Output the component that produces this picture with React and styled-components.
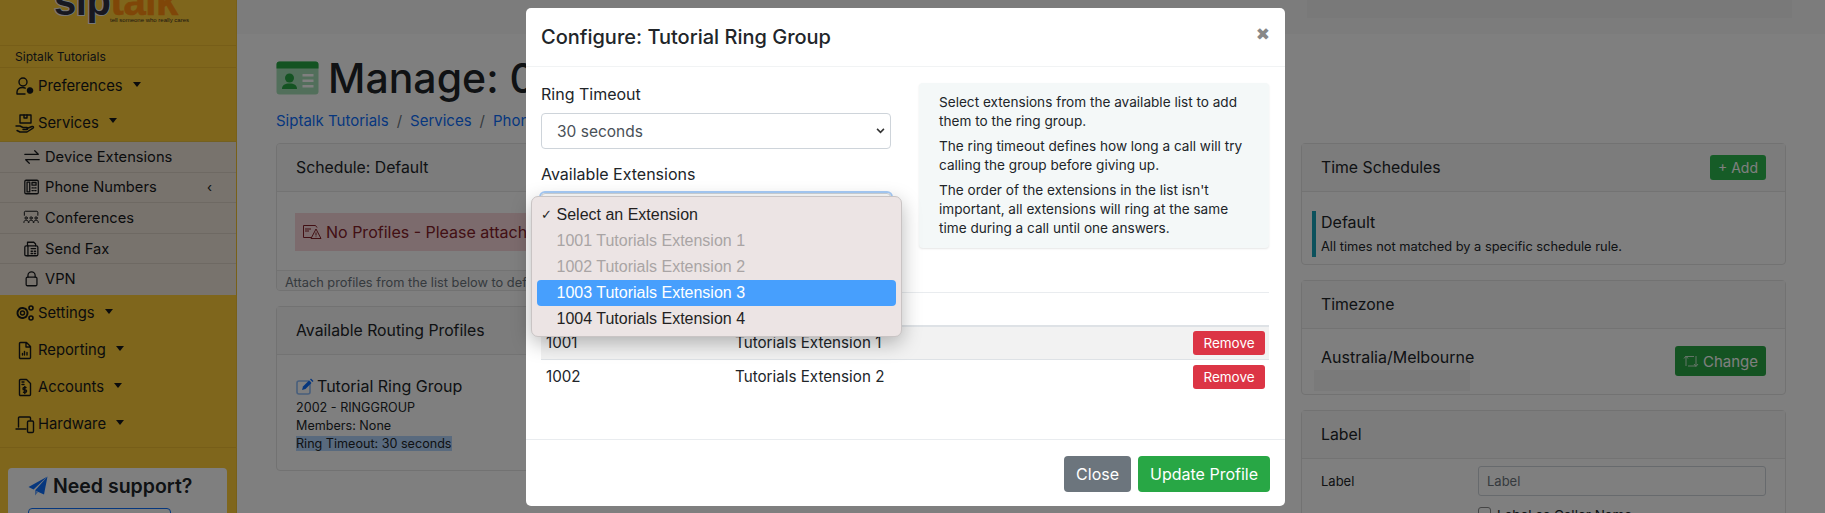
import React from "react";
import styled, { createGlobalStyle } from "styled-components";

const Global = createGlobalStyle`
  html, body { margin: 0; padding: 0; height: 513px; overflow: hidden; background: #fff; }
  body { font-family: Inter, "Open Sans", "Liberation Sans", sans-serif; color: #212529; }
  * { box-sizing: border-box; }
  #root { height: 513px; }
`;

const Page = styled.div`
  position: relative;
  display: flex;
  width: 1825px;
  height: 513px;
  overflow: hidden;
`;
const Sidebar = styled.aside`
  flex: 0 0 237px;
  background: #fecc38;
  border-right: 1px solid #f0c030;
  display: flex;
  flex-direction: column;
  > * { flex: none; }
`;
const LogoWrap = styled.div`
  height: 46px;
  border-bottom: 1px solid #eebd30;
  overflow: hidden;
  padding-left: 54px;
`;
const LogoMark = styled.div`
  font-family: "Liberation Sans", sans-serif;
  font-weight: 700;
  font-size: 40px;
  line-height: 30px;
  letter-spacing: -0.4px;
  margin-top: -14px;
  white-space: nowrap;
  color: #2f3140;
  -webkit-text-stroke: 2px #f0f0f0;
  paint-order: stroke fill;
  span { color: #ff8c10; -webkit-text-stroke: 0.6px #ff8c10; }
`;
const LogoTag = styled.div`
  font-family: "Liberation Sans", sans-serif;
  font-size: 6px;
  line-height: 7px;
  margin: 1px 0 0 56px;
  white-space: nowrap;
  color: #3a3020;
`;
const Account = styled.div`
  height: 22px;
  border-bottom: 1px solid #eebd30;
  padding-left: 15px;
  font-size: 12.1px;
  line-height: 22px;
  color: #212529;
`;
const NavItem = styled.div`
  height: ${(p) => (p.$tight ? 36.5 : 37)}px;
  display: flex;
  align-items: center;
  padding-left: 15px;
  gap: 3px;
  font-size: 14.8px;
  color: #16181b;
  svg { flex: none; }
`;
const Caret = styled.i`
  width: 0;
  height: 0;
  margin-left: 7px;
  margin-bottom: 4px;
  border-left: 4.5px solid transparent;
  border-right: 4.5px solid transparent;
  border-top: 5px solid #16181b;
`;
const SubMenu = styled.div`
  background: #f0e6da;
  border-top: 1px solid #e8c040;
`;
const SubItem = styled.div`
  height: 30.6px;
  display: flex;
  align-items: center;
  padding: 0 24px 0 23px;
  gap: 4px;
  font-size: 14.7px;
  color: #16181b;
  border-bottom: 1px solid ${(p) => (p.$last ? "transparent" : "#ddd2c6")};
  svg { flex: none; }
`;
const Chevron = styled.span`
  margin-left: auto;
  font-size: 13px;
`;
const NavGroup = styled.div`
  border-bottom: 1px solid #eebd30;
  padding-bottom: 4px;
`;
const Support = styled.div`
  margin: 20px 9px 0 8px;
  height: 80px;
  border-radius: 4px;
  background: #fff;
  padding: 6px 20px;
`;
const SupportTitle = styled.div`
  display: flex;
  align-items: center;
  gap: 5px;
  font-size: 19.5px;
  font-weight: 600;
  line-height: 24px;
`;
const SupportBtn = styled.div`
  margin-top: 10px;
  width: 143px;
  height: 36px;
  border: 1px solid #0d6efd;
  border-radius: 4px;
`;

const Main = styled.main`
  flex: 1;
  min-width: 0;
  display: flex;
  flex-direction: column;
`;
const TopBar = styled.div`
  height: 34px;
  flex: none;
  background: #f9f9f9;
  padding-left: 1070px;
`;
const TopInner = styled.div`
  width: 485px;
  height: 18px;
  background: #f2f2f2;
`;
const Content = styled.div`
  padding: 20px 39px 0 39px;
`;
const TitleRow = styled.div`
  display: flex;
  align-items: center;
  gap: 9px;
  height: 48px;
`;
const H1 = styled.h1`
  margin: 0;
  font-size: 41px;
  font-weight: 500;
  white-space: nowrap;
  color: #212529;
`;
const Crumbs = styled.div`
  margin-top: 7px;
  height: 24px;
  display: flex;
  gap: 8px;
  font-size: 15px;
  line-height: 24px;
  color: #6c757d;
  white-space: nowrap;
  a { color: #0d6efd; }
`;
const Columns = styled.div`
  display: grid;
  grid-template-columns: 1000px 485px;
  gap: 25px;
  margin-top: 10px;
`;
const Stack = styled.div`
  display: flex;
  flex-direction: column;
  gap: 15px;
`;
const Card = styled.section`
  border: 1px solid #e4e4e4;
  border-radius: 4px;
  background: #fff;
  height: ${(p) => p.$h}px;
  overflow: ${(p) => (p.$clip ? "hidden" : "visible")};
`;
const CardHead = styled.div`
  height: 48px;
  padding: 0 19px;
  display: flex;
  align-items: center;
  justify-content: space-between;
  background: #f8f8f8;
  border-bottom: 1px solid #e6e6e6;
  font-size: 15.8px;
  color: #212529;
`;
const Alert = styled.div`
  margin: 21px 18px 0;
  height: 38px;
  background: #f8d7da;
  color: #842029;
  display: flex;
  align-items: center;
  gap: 4px;
  padding-left: 7px;
  font-size: 16px;
  white-space: nowrap;
  width: 700px;
`;
const CardFoot = styled.div`
  margin-top: 19px;
  height: 24px;
  background: #f8f8f8;
  border-top: 1px solid #e6e6e6;
  padding-left: 8px;
  font-size: 12.8px;
  line-height: 23px;
  color: #6c757d;
  white-space: nowrap;
`;
const Profile = styled.div`
  padding: 18px 19px;
`;
const ProfileTitle = styled.div`
  display: flex;
  align-items: center;
  gap: 3px;
  font-size: 16px;
  line-height: 26px;
`;
const Small = styled.div`
  font-size: 12.6px;
  line-height: 18px;
  white-space: nowrap;
`;
const Highlight = styled.span`
  background: #b3d4fc;
`;
const ScheduleRow = styled.div`
  margin: 19px 0 0 10px;
  border-left: 4px solid #17a2b8;
  height: 46px;
  padding-left: 5px;
`;
const BigText = styled.div`
  font-size: 16px;
  line-height: 23px;
`;
const MiniText = styled.div`
  font-size: 12.85px;
  line-height: 25px;
`;
const GreenBtn = styled.div`
  background: ${(p) => (p.$dark ? "#28a745" : "#2db84e")};
  color: #fff;
  border-radius: 3px;
  font-size: ${(p) => p.$fs}px;
  height: ${(p) => p.$h}px;
  padding: 0 8px;
  display: flex;
  align-items: center;
  gap: 4px;
`;
const ZoneBody = styled.div`
  padding: 17px 19px 0 12px;
  display: flex;
  justify-content: space-between;
`;
const ZoneName = styled.div`
  padding-left: 7px;
  font-size: 16px;
  line-height: 22px;
`;
const Redacted = styled.div`
  width: 156px;
  height: 21px;
  margin-top: 2px;
  background: #f4f4f4;
`;
const FormRow = styled.div`
  display: grid;
  grid-template-columns: 157px 1fr;
  padding: 7px 19px 0;
  align-items: center;
  font-size: 13px;
`;
const FakeInput = styled.div`
  height: 30px;
  border: 1px solid #ced4da;
  border-radius: 3px;
  padding-left: 8px;
  line-height: 28px;
  color: #6c757d;
`;
const CheckRow = styled.div`
  margin: 11px 0 0 176px;
  display: flex;
  gap: 6px;
  font-size: 13.5px;
  line-height: 16px;
  i { width: 13px; height: 13px; border: 1px solid #8a8a8a; border-radius: 3px; }
`;

const Backdrop = styled.div`
  position: absolute;
  inset: 0;
  background: rgba(0, 0, 0, 0.5);
  padding: 8px 0 0 526px;
`;
const Modal = styled.div`
  position: relative;
  width: 759px;
  height: 498px;
  background: #fff;
  border-radius: 5px;
  display: flex;
  flex-direction: column;
`;
const ModalHead = styled.header`
  height: 59px;
  flex: none;
  border-bottom: 1px solid #f1f3f4;
  padding: 0 15px 0 15px;
  display: flex;
  align-items: center;
  justify-content: space-between;
`;
const ModalTitle = styled.h5`
  margin: 0;
  font-size: 20px;
  font-weight: 500;
  color: #212529;
`;
const CloseX = styled.span`
  font-size: 17px;
  color: #888;
  margin-top: -6px;
  font-family: "DejaVu Sans", sans-serif;
`;
const ModalBody = styled.div`
  flex: 1;
  padding: 16px 15px 0;
`;
const FormGrid = styled.div`
  display: grid;
  grid-template-columns: 350px 350px;
  gap: 28px;
  height: 197px;
`;
const Field = styled.div`
  position: relative;
  margin-bottom: 14px;
`;
const FieldLabel = styled.label`
  display: block;
  font-size: 16px;
  line-height: 22px;
  margin-bottom: 8px;
  color: #212529;
`;
const SelectBox = styled.div`
  width: 350px;
  height: 36px;
  border: 1px solid #ced4da;
  border-radius: 4px;
  padding: 0 5px 0 15px;
  display: flex;
  align-items: center;
  justify-content: space-between;
  font-size: 15.5px;
  color: #495057;
  box-shadow: ${(p) => (p.$focus ? "0 0 0 2px #a8cdf8" : "none")};
`;
const Dropdown = styled.div`
  position: absolute;
  left: -10px;
  top: 33px;
  z-index: 3;
  width: 371px;
  height: 141px;
  padding: 5px;
  background: #ece4e4;
  border: 1px solid #c9c4c4;
  border-radius: 7px;
  box-shadow: 0 6px 20px rgba(0, 0, 0, 0.28);
  font-family: "Liberation Sans", Inter, sans-serif;
  font-size: 16px;
`;
const Option = styled.div`
  position: relative;
  height: 26px;
  line-height: 26px;
  padding-left: 19.5px;
  border-radius: 4px;
  white-space: nowrap;
  color: ${(p) => (p.$active ? "#fff" : p.$off ? "#a9a4a4" : "#231f1f")};
  background: ${(p) => (p.$active ? "#479ffd" : "transparent")};
`;
const Tick = styled.span`
  position: absolute;
  left: 4px;
  font-size: 13px;
  font-weight: 700;
  font-family: "DejaVu Sans", sans-serif;
`;
const InfoBox = styled.div`
  height: 165px;
  padding: 10px 18px 10px 20px;
  background: #f4f8f8;
  border-radius: 4px;
  box-shadow: 0 1px 2px rgba(0, 0, 0, 0.1);
  font-size: 13.6px;
  line-height: 19px;
  color: #212529;
  p { margin: 0 0 6px; }
`;
const ExtTable = styled.table`
  width: 728px;
  margin-top: 12px;
  border-collapse: collapse;
  table-layout: fixed;
  font-size: 15.2px;
  color: #212529;
  td { padding: 0 5px; height: 34px; border-bottom: 1px solid #dee2e6; }
`;
const HeadRow = styled.tr`
  td { height: 33px; border-top: 1px solid #e9ecef; border-bottom: 2px solid #dee2e6; }
`;
const StripeRow = styled.tr`
  background: ${(p) => (p.$odd ? "#f2f2f2" : "#fff")};
  td:last-child { text-align: right; padding-right: 4px; }
`;
const PlainRow = styled.tr`
  td { border-bottom: none; text-align: left; }
  td:last-child { text-align: right; padding-right: 4px; }
`;
const RemoveBtn = styled.span`
  display: inline-block;
  width: 72px;
  height: 24px;
  line-height: 24px;
  text-align: center;
  border-radius: 3px;
  background: #dc3545;
  color: #fff;
  font-size: 13.5px;
  vertical-align: middle;
`;
const ModalFoot = styled.footer`
  height: 67px;
  flex: none;
  border-top: 1px solid #e9ecef;
  padding: 16px 15px;
  display: flex;
  justify-content: flex-end;
  gap: 7px;
`;
const FootBtn = styled.span`
  height: 36px;
  line-height: 36px;
  padding: 0 12px;
  border-radius: 4px;
  font-size: 16px;
  color: #fff;
  background: ${(p) => p.$bg};
`;

const Ico = ({ w = 20, h = 20, vb = "0 0 20 20", children, stroke = "#16181b", sw = 1.4 }) => (
  <svg width={w} height={h} viewBox={vb} fill="none" stroke={stroke} strokeWidth={sw} strokeLinecap="round" strokeLinejoin="round">
    {children}
  </svg>
);

const PrefIcon = () => (
  <Ico>
    <circle cx="8" cy="6" r="4" />
    <path d="M2 18v-2c0-3 2.500-4.500 5.500-4.500 1 0 2 .2 2.800.6M2 18h8" />
    <circle cx="15" cy="14.500" r="2.300" fill="#16181b" strokeWidth="2" strokeDasharray="1.500 .8" />
  </Ico>
);
const ServIcon = () => (
  <Ico>
    <rect x="5" y="2" width="11" height="8" />
    <path d="M9 2v3h3V2" />
    <path d="M1 13h4l3 1.500h4c1 0 1 2 0 2H8M12 15.500l5-2c1.500-.5 2 1 1 1.700L12 19H5l-3-1.500" />
  </Ico>
);
const SwapIcon = () => (
  <Ico w={18} h={18}>
    <path d="M2 7h15M13 3l4 4M18 13H3M7 17l-4-4" />
  </Ico>
);
const BookIcon = () => (
  <Ico w={18} h={18}>
    <rect x="2" y="2.500" width="15" height="15" rx="1.500" />
    <rect x="4.500" y="4.500" width="3" height="11" />
    <path d="M10 5h4.500v3H10zM10 11h1.500M13 11h1.500M10 14h1.500M13 14h1.500" />
  </Ico>
);
const ConfIcon = () => (
  <Ico w={18} h={18} sw={1.1}>
    <path d="M1.500 7V3.500c0-.5.500-1 1-1h13c.5 0 1 .5 1 1V7" />
    <circle cx="3.500" cy="10" r="1.300" />
    <circle cx="9" cy="10" r="1.300" />
    <circle cx="14.500" cy="10" r="1.300" />
    <path d="M1 15c0-2 1-2.500 2.500-2.500S6 13 6 15M6.500 15c0-2 1-2.500 2.500-2.500s2.500.5 2.500 2.500M12 15c0-2 1-2.500 2.500-2.500S17 13 17 15" />
  </Ico>
);
const FaxIcon = () => (
  <Ico w={18} h={18}>
    <rect x="2" y="6.500" width="14.500" height="11" rx="1.500" />
    <path d="M5 6.500V2.500h7l2 2v2M5.500 6.500v11" />
    <path d="M9 9.500h5M9 12.500h1.500M12.500 12.500H14M9 15h1.500M12.500 15H14" />
  </Ico>
);
const LockIcon = () => (
  <Ico w={18} h={18}>
    <rect x="3.500" y="8" width="12" height="9.500" rx="1.500" />
    <path d="M5.500 8V6a4 4 0 0 1 8 0v2" />
  </Ico>
);
const GearIcon = () => (
  <Ico>
    <circle cx="7.500" cy="10" r="5" strokeWidth="2" strokeDasharray="2 1.200" />
    <circle cx="7.500" cy="10" r="2" />
    <circle cx="16" cy="5" r="2" strokeWidth="1.600" />
    <circle cx="16" cy="15" r="2" strokeWidth="1.600" />
  </Ico>
);
const ReportIcon = () => (
  <Ico>
    <path d="M5.500 2.500h6l4 4v11a1 1 0 0 1-1 1h-9a1 1 0 0 1-1-1v-14a1 1 0 0 1 1-1zM11 2.500V7h4.500" />
    <path d="M7.500 15v-1.500M9.500 15v-3.500M12 15v-2.500" />
  </Ico>
);
const AccountIcon = () => (
  <Ico>
    <path d="M5.500 2.500h6l4 4v11a1 1 0 0 1-1 1h-9a1 1 0 0 1-1-1v-14a1 1 0 0 1 1-1zM7 5h2M7 7.500h2" />
    <path d="M11 10.500H9.200a1.200 1.200 0 0 0 0 2.400h1.200a1.200 1.200 0 0 1 0 2.400H8.500M9.800 9.500v7" />
  </Ico>
);
const HardwareIcon = () => (
  <Ico>
    <path d="M3.500 13V4a1 1 0 0 1 1-1h10a1 1 0 0 1 1 1v2M1 15h10" />
    <rect x="12.500" y="7" width="6" height="11.500" rx="1.200" />
  </Ico>
);
const CardIcon = () => (
  <svg width="43" height="34" viewBox="0 0 42 34">
    <rect width="42" height="33" y="0.500" rx="3" fill="#a5dfb6" />
    <path d="M3 .5h36a3 3 0 0 1 3 3V7.500H0V3.500a3 3 0 0 1 3-3z" fill="#28a745" />
    <circle cx="13" cy="17" r="4.500" fill="#28a745" />
    <path d="M5.500 28c0-4 3-5.500 7.500-5.500s7.500 1.500 7.500 5.500z" fill="#28a745" />
    <path d="M26 13h11v2.500H26zM26 18.500h11V21H26zM26 24h11v2.500H26z" fill="#fff" />
  </svg>
);
const WarnIcon = () => (
  <svg width="20" height="16" viewBox="0 0 20 16" fill="none" stroke="#842029" strokeWidth="1">
    <path d="M9 13.500H1.500v-12h12l1.500 2" />
    <path d="M4 4v4M6 4v4M8 4v2" />
    <path d="M14 5l5 9.500H9z" />
    <path d="M14 8.500v3M14 12.500v.6" />
  </svg>
);
const EditIcon = () => (
  <svg width="18" height="17" viewBox="0 0 18 17" fill="none">
    <rect x="1" y="3" width="13" height="13" rx="2" stroke="#90bdf8" strokeWidth="1.600" />
    <path d="M6 12l1-3.500 6-6 2.500 2.500-6 6z" fill="#0d6efd" />
    <path d="M14 1.500l1-1 2.500 2.500-1 1z" fill="#0d6efd" />
  </svg>
);
const PlaneIcon = () => (
  <svg width="20" height="20" viewBox="0 0 20 20">
    <path d="M19.500 0.500L0.500 11l5 2.500z" fill="#0d6efd" />
    <path d="M19.500 0.500L7 14.500l9 4z" fill="#0d6efd" />
    <path d="M7 14.500v5l3-3.500z" fill="#6ea8fe" />
  </svg>
);
const RetweetIcon = () => (
  <svg width="16" height="14" viewBox="0 0 16 14" fill="none" stroke="#fff" strokeWidth="1" opacity=".75">
    <path d="M3 12V2.500M1 4.500l2-2.500 2 2.500M3 2.500h8M13 2v10M11 10l2 2.500 2-2.500M13 12H5" />
  </svg>
);

const Nav = ({ icon, label, tight }) => (
  <NavItem $tight={tight}>
    {icon}
    {label}
    <Caret />
  </NavItem>
);

export default function App() {
  return (
    <Page>
      <Global />
      <Sidebar>
        <LogoWrap>
          <LogoMark>
            sip<span>talk</span>
          </LogoMark>
          <LogoTag>tell someone who really cares</LogoTag>
        </LogoWrap>
        <Account>Siptalk Tutorials</Account>
        <Nav tight icon={<PrefIcon />} label="Preferences" />
        <Nav tight icon={<ServIcon />} label="Services" />
        <SubMenu>
          <SubItem><SwapIcon />Device Extensions</SubItem>
          <SubItem><BookIcon />Phone Numbers<Chevron>‹</Chevron></SubItem>
          <SubItem><ConfIcon />Conferences</SubItem>
          <SubItem><FaxIcon />Send Fax</SubItem>
          <SubItem $last><LockIcon />VPN</SubItem>
        </SubMenu>
        <NavGroup>
          <Nav icon={<GearIcon />} label="Settings" />
          <Nav icon={<ReportIcon />} label="Reporting" />
          <Nav icon={<AccountIcon />} label="Accounts" />
          <Nav icon={<HardwareIcon />} label="Hardware" />
        </NavGroup>
        <Support>
          <SupportTitle><PlaneIcon />Need support?</SupportTitle>
          <SupportBtn />
        </Support>
      </Sidebar>
      <Main>
        <TopBar><TopInner /></TopBar>
        <Content>
          <TitleRow>
            <CardIcon />
            <H1>Manage: 0</H1>
          </TitleRow>
          <Crumbs>
            <a>Siptalk Tutorials</a>/<a>Services</a>/<a>Phone Numbers</a>
          </Crumbs>
          <Columns>
            <Stack>
              <Card $h={148} $clip>
                <CardHead>Schedule: Default</CardHead>
                <Alert><WarnIcon />No Profiles - Please attach a profile to this schedule</Alert>
                <CardFoot>Attach profiles from the list below to define call routing for this schedule</CardFoot>
              </Card>
              <Card $h={165}>
                <CardHead>Available Routing Profiles</CardHead>
                <Profile>
                  <ProfileTitle><EditIcon />Tutorial Ring Group</ProfileTitle>
                  <Small>2002 - RINGGROUP</Small>
                  <Small>Members: None</Small>
                  <Small><Highlight>Ring Timeout: 30 seconds</Highlight></Small>
                </Profile>
              </Card>
            </Stack>
            <Stack>
              <Card $h={122}>
                <CardHead>
                  Time Schedules
                  <GreenBtn $h={25} $fs={14}>+ Add</GreenBtn>
                </CardHead>
                <ScheduleRow>
                  <BigText>Default</BigText>
                  <MiniText>All times not matched by a specific schedule rule.</MiniText>
                </ScheduleRow>
              </Card>
              <Card $h={115}>
                <CardHead>Timezone</CardHead>
                <ZoneBody>
                  <div>
                    <ZoneName>Australia/Melbourne</ZoneName>
                    <Redacted />
                  </div>
                  <GreenBtn $h={30} $fs={15} $dark><RetweetIcon />Change</GreenBtn>
                </ZoneBody>
              </Card>
              <Card $h={200}>
                <CardHead>Label</CardHead>
                <FormRow>
                  Label
                  <FakeInput>Label</FakeInput>
                </FormRow>
                <CheckRow><i />Label as Caller Name</CheckRow>
              </Card>
            </Stack>
          </Columns>
        </Content>
      </Main>
      <Backdrop>
        <Modal>
          <ModalHead>
            <ModalTitle>Configure: Tutorial Ring Group</ModalTitle>
            <CloseX>✖</CloseX>
          </ModalHead>
          <ModalBody>
            <FormGrid>
              <div>
                <Field>
                  <FieldLabel>Ring Timeout</FieldLabel>
                  <SelectBox>
                    30 seconds
                    <svg width="9" height="6" viewBox="0 0 10 7" fill="none" stroke="#333" strokeWidth="1.800"><path d="M1 1l4 4 4-4" /></svg>
                  </SelectBox>
                </Field>
                <Field>
                  <FieldLabel>Available Extensions</FieldLabel>
                  <SelectBox $focus />
                  <Dropdown>
                    <Option><Tick>✓</Tick>Select an Extension</Option>
                    <Option $off>1001 Tutorials Extension 1</Option>
                    <Option $off>1002 Tutorials Extension 2</Option>
                    <Option $active>1003 Tutorials Extension 3</Option>
                    <Option>1004 Tutorials Extension 4</Option>
                  </Dropdown>
                </Field>
              </div>
              <InfoBox>
                <p>Select extensions from the available list to add them to the ring group.</p>
                <p>The ring timeout defines how long a call will try calling the group before giving up.</p>
                <p>The order of the extensions in the list isn't important, all extensions will ring at the same time during a call until one answers.</p>
              </InfoBox>
            </FormGrid>
            <ExtTable>
              <colgroup>
                <col width="189" />
                <col width="360" />
                <col width="179" />
              </colgroup>
              <tbody>
                <HeadRow><td /><td /><td /></HeadRow>
                <StripeRow $odd>
                  <td>1001</td><td>Tutorials Extension 1</td><td><RemoveBtn>Remove</RemoveBtn></td>
                </StripeRow>
                <PlainRow>
                  <td>1002</td><td>Tutorials Extension 2</td><td><RemoveBtn>Remove</RemoveBtn></td>
                </PlainRow>
              </tbody>
            </ExtTable>
          </ModalBody>
          <ModalFoot>
            <FootBtn $bg="#6c757d">Close</FootBtn>
            <FootBtn $bg="#28a745">Update Profile</FootBtn>
          </ModalFoot>
        </Modal>
      </Backdrop>
    </Page>
  );
}
